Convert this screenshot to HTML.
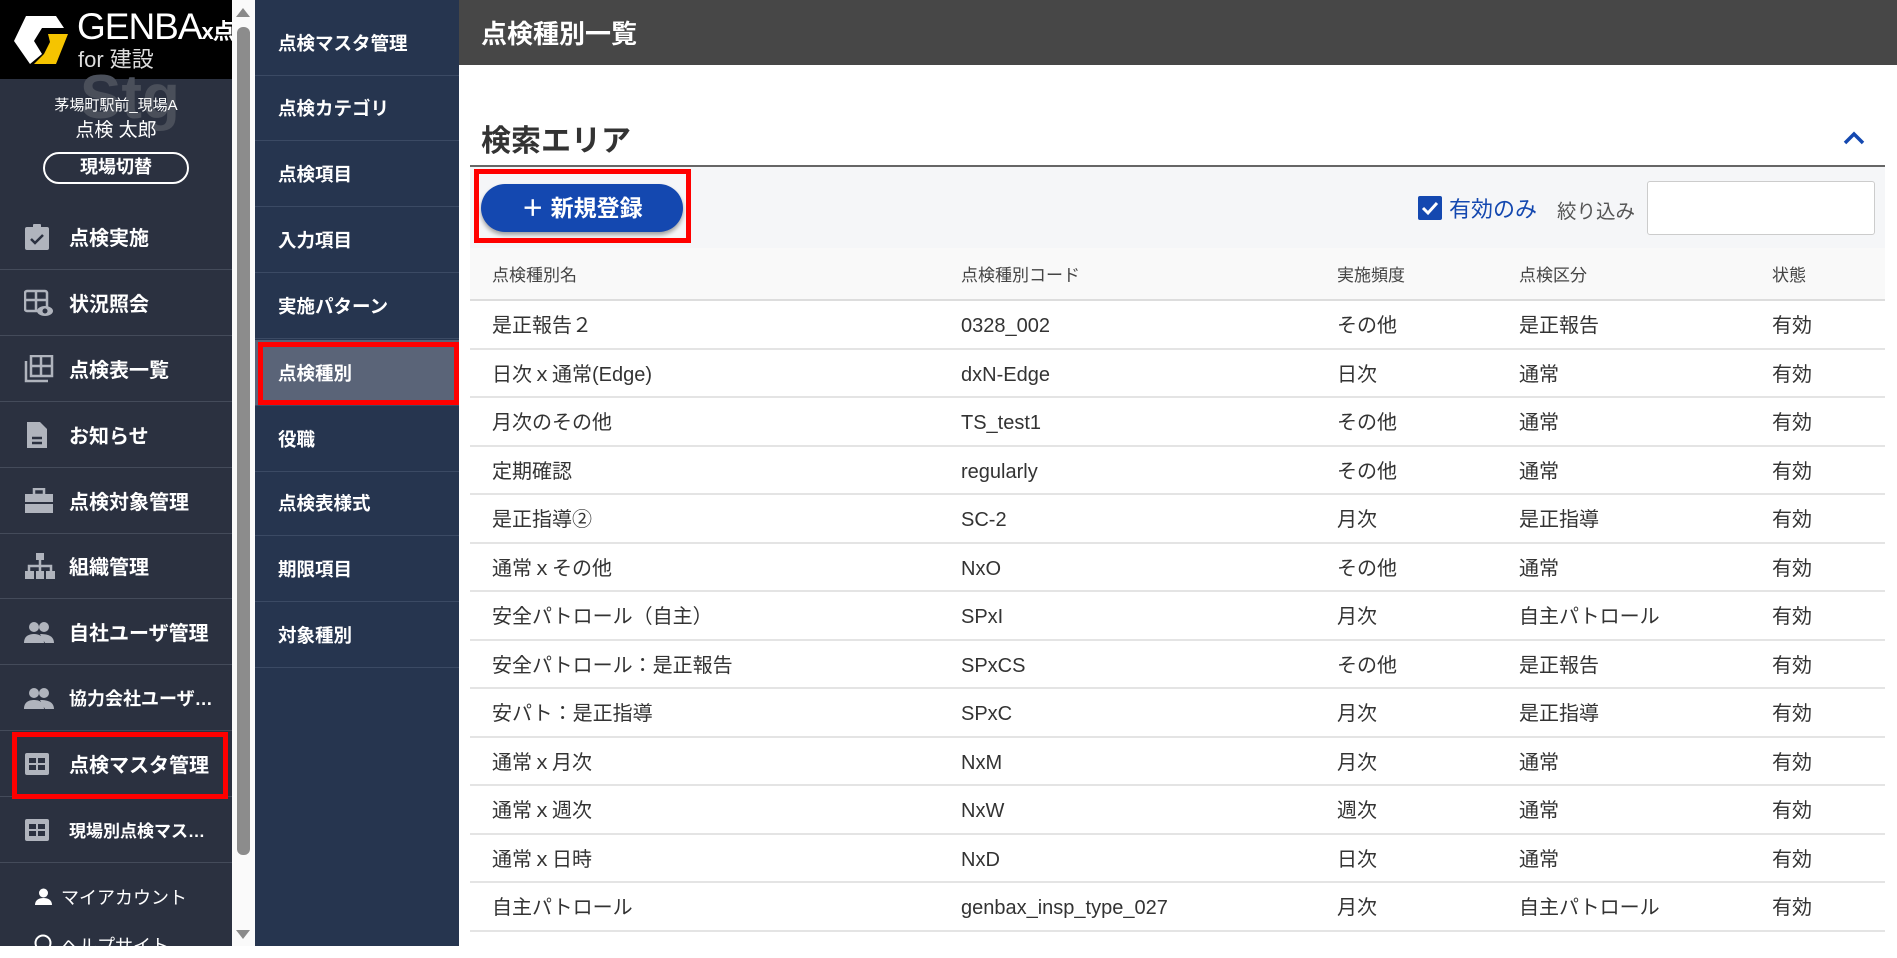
<!DOCTYPE html>
<html><head><meta charset="utf-8"><style>
*{margin:0;padding:0;box-sizing:border-box}
body{width:1897px;height:946px;overflow:hidden;position:relative;background:#fff;font-family:"Liberation Sans","Noto Sans CJK JP",sans-serif;color:#333}
.abs{position:absolute}
#side{left:0;top:0;width:232px;height:946px;background:#2b3140}
#logo{left:0;top:0;width:232px;height:79px;background:#000}
.si{position:absolute;left:0;width:232px;height:66px;border-bottom:1px solid #444b5a;color:#fff;font-weight:bold;font-size:20px;display:flex;align-items:center}
.si svg{position:absolute;left:24px}
.si span{position:absolute;left:69px;white-space:nowrap}
#sb{left:232px;top:0;width:23px;height:946px;background:#fafafa}
#nav2{left:255px;top:0;width:204px;height:946px;background:#26354f}
.ni{position:absolute;left:0;width:204px;height:66px;border-bottom:1px solid #3b4a64;color:#fff;font-weight:bold;font-size:18.5px;padding-left:23px;display:flex;align-items:center}
#hdr{left:459px;top:0;width:1438px;height:65px;background:#474747;color:#fff;font-weight:bold;font-size:26px;padding:14px 0 0 22px}
.row{position:absolute;left:470px;width:1415px;height:48.5px;border-bottom:2px solid #e4e4e4;font-size:20px;color:#333}
.row div,.hr div{position:absolute;top:0;line-height:51px;white-space:nowrap}
.hr div{line-height:55px}
.c1{left:22px}.c2{left:491px}.c3{left:867px}.c4{left:1049px}.c5{left:1302px}
</style></head><body>
<div id="side" class="abs">
<div id="logo" class="abs">
<svg class="abs" style="left:12px;top:14px" width="58" height="52" viewBox="0 0 58 52"><polygon points="14,2 44,2 52,14 30,14 22,27 30,40 18,50 2,27" fill="#fff"/><polygon points="36,20 56,20 44,50 22,50 32,40 38,28" fill="#f5c400"/></svg>
<div class="abs" style="left:77px;top:6px;color:#fff;font-size:37px;letter-spacing:-1px;white-space:nowrap">GENBA<span style="font-size:22px;font-weight:bold">x点検</span></div>
<div class="abs" style="left:78px;top:42px;color:#ddd;font-size:22px">for 建設</div>
</div>
<div class="abs" style="left:80px;top:62px;font-size:62px;font-weight:bold;color:#4a4f5a">Stg</div>
<div class="abs" style="left:0;width:232px;top:94px;text-align:center;color:#fff;font-size:15px">茅場町駅前_現場A</div>
<div class="abs" style="left:0;width:232px;top:115px;text-align:center;color:#fff;font-size:19px">点検 太郎</div>
<div class="abs" style="left:43px;top:152px;width:146px;height:32px;border:2px solid #fff;border-radius:16px;color:#fff;font-weight:bold;font-size:18px;text-align:center;line-height:27px">現場切替</div>
<div class="si" style="top:204px"><svg width="26" height="28" viewBox="0 0 26 28"><rect x="1" y="4" width="24" height="23" rx="2" fill="#b0b4bd"/><rect x="9" y="1" width="8" height="5" rx="1" fill="#b0b4bd"/><path d="M7 16l4 4 8-8" stroke="#2b3140" stroke-width="2.5" fill="none"/></svg><span>点検実施</span></div>
<div class="si" style="top:270px"><svg width="30" height="28" viewBox="0 0 30 28"><rect x="1" y="2" width="22" height="20" rx="2" fill="none" stroke="#b0b4bd" stroke-width="2.5"/><path d="M1 11h22M12 2v20" stroke="#b0b4bd" stroke-width="2.5"/><ellipse cx="21" cy="22" rx="8" ry="5" fill="#b0b4bd"/><circle cx="21" cy="22" r="2.5" fill="#2b3140"/></svg><span>状況照会</span></div>
<div class="si" style="top:336px"><svg width="30" height="28" viewBox="0 0 30 28"><path d="M2 6v20h22" stroke="#b0b4bd" stroke-width="2.5" fill="none"/><rect x="7" y="1" width="21" height="20" fill="none" stroke="#b0b4bd" stroke-width="2.5"/><path d="M7 11h21M17 1v20" stroke="#b0b4bd" stroke-width="2.5"/></svg><span>点検表一覧</span></div>
<div class="si" style="top:402px"><svg width="26" height="28" viewBox="0 0 26 28"><path d="M3 1h13l7 7v19H3z" fill="#b0b4bd"/><path d="M8 17h10M8 22h10" stroke="#2b3140" stroke-width="2.5"/></svg><span>お知らせ</span></div>
<div class="si" style="top:468px"><svg width="30" height="26" viewBox="0 0 30 26"><rect x="10" y="1" width="10" height="6" fill="none" stroke="#b0b4bd" stroke-width="2.5"/><rect x="1" y="6" width="28" height="19" fill="#b0b4bd"/><path d="M1 15h28" stroke="#2b3140" stroke-width="2"/></svg><span>点検対象管理</span></div>
<div class="si" style="top:533px"><svg width="32" height="28" viewBox="0 0 32 28"><rect x="12" y="1" width="8" height="7" fill="#b0b4bd"/><path d="M16 8v6M5 20v-6h22v6M16 14v6" stroke="#b0b4bd" stroke-width="2.5" fill="none"/><rect x="1" y="19" width="9" height="8" fill="#b0b4bd"/><rect x="12" y="19" width="8" height="8" fill="#b0b4bd"/><rect x="22" y="19" width="9" height="8" fill="#b0b4bd"/></svg><span>組織管理</span></div>
<div class="si" style="top:599px"><svg width="30" height="22" viewBox="0 0 30 22"><circle cx="10" cy="6" r="5" fill="#b0b4bd"/><circle cx="20" cy="6" r="5" fill="#b0b4bd"/><path d="M0 22c0-7 5-9 10-9s10 2 10 9zM16 13c6 0 14 1 14 9h-9" fill="#b0b4bd"/></svg><span>自社ユーザ管理</span></div>
<div class="si" style="top:665px"><svg width="30" height="22" viewBox="0 0 30 22"><circle cx="10" cy="6" r="5" fill="#b0b4bd"/><circle cx="20" cy="6" r="5" fill="#b0b4bd"/><path d="M0 22c0-7 5-9 10-9s10 2 10 9zM16 13c6 0 14 1 14 9h-9" fill="#b0b4bd"/></svg><span style="font-size:18px">協力会社ユーザ…</span></div>
<div class="si" style="top:731px"><svg width="26" height="24" viewBox="0 0 26 24"><rect x="1" y="1" width="24" height="22" rx="2" fill="#b0b4bd"/><path d="M5 6h7v5H5zM14 6h7v5h-7zM5 13h7v5H5zM14 13h7v5h-7z" fill="#2b3140"/></svg><span>点検マスタ管理</span></div>
<div class="si" style="top:797px"><svg width="26" height="24" viewBox="0 0 26 24"><rect x="1" y="1" width="24" height="22" rx="2" fill="#b0b4bd"/><path d="M5 6h7v5H5zM14 6h7v5h-7zM5 13h7v5H5zM14 13h7v5h-7z" fill="#2b3140"/></svg><span style="font-size:17px">現場別点検マス…</span></div>
<div class="abs" style="left:12px;top:732px;width:216px;height:67px;border:5px solid #f00"></div>
<svg class="abs" style="left:35px;top:888px" width="17" height="17" viewBox="0 0 17 17"><circle cx="8.5" cy="5" r="4.5" fill="#fff"/><path d="M0 17c0-5 4-7 8.5-7s8.5 2 8.5 7z" fill="#fff"/></svg>
<div class="abs" style="left:61px;top:884px;color:#fff;font-size:18px">マイアカウント</div>
<svg class="abs" style="left:34px;top:934px" width="18" height="18" viewBox="0 0 18 18"><circle cx="9" cy="9" r="7.5" fill="none" stroke="#fff" stroke-width="2"/></svg>
<div class="abs" style="left:61px;top:932px;color:#fff;font-size:18px">ヘルプサイト</div>
</div>
<div id="sb" class="abs"><svg class="abs" style="left:4px;top:8px" width="14" height="9"><polygon points="7,0 14,9 0,9" fill="#8a8a8a"/></svg><div class="abs" style="left:5px;top:27px;width:13px;height:828px;background:#8c8c8c;border-radius:6px"></div><svg class="abs" style="left:4px;top:930px" width="14" height="9"><polygon points="0,0 14,0 7,9" fill="#8a8a8a"/></svg></div>
<div id="nav2" class="abs">
<div class="ni" style="top:10px;height:66px">点検マスタ管理</div>
<div class="ni" style="top:76px;height:65px">点検カテゴリ</div>
<div class="ni" style="top:141px">点検項目</div>
<div class="ni" style="top:207px">入力項目</div>
<div class="ni" style="top:273px">実施パターン</div>
<div class="ni" style="top:340px;background:#5a6478">点検種別</div>
<div class="ni" style="top:406px">役職</div>
<div class="ni" style="top:470px">点検表様式</div>
<div class="ni" style="top:536px">期限項目</div>
<div class="ni" style="top:602px">対象種別</div>
<div class="abs" style="left:3px;top:342px;width:201px;height:63px;border:5px solid #f00"></div>
</div>
<div id="hdr" class="abs">点検種別一覧</div>
<div class="abs" style="left:481px;top:116px;font-size:30px;font-weight:bold;color:#333">検索エリア</div>
<svg class="abs" style="left:1843px;top:131px" width="22" height="14" viewBox="0 0 22 14"><path d="M2 12L11 3l9 9" stroke="#1448b0" stroke-width="3.5" fill="none"/></svg>
<div class="abs" style="left:470px;top:165px;width:1415px;height:2px;background:#666"></div>
<div class="abs" style="left:470px;top:167px;width:1415px;height:81px;background:#f5f6f8"></div>
<div class="abs" style="left:481px;top:184px;width:202px;height:48px;border-radius:24px;background:#1448b0;box-shadow:0 3px 4px rgba(0,0,0,.35);color:#fff;font-weight:bold;font-size:23px;text-align:center;line-height:48px">＋ 新規登録</div>
<div class="abs" style="left:474px;top:169px;width:217px;height:74px;border:5px solid #f00"></div>
<svg class="abs" style="left:1418px;top:196px" width="24" height="24" viewBox="0 0 24 24"><rect width="24" height="24" rx="2" fill="#1448b0"/><path d="M5 12l5 5 9-10" stroke="#fff" stroke-width="3" fill="none"/></svg>
<div class="abs" style="left:1449px;top:192px;font-size:22px;color:#1448b0">有効のみ</div>
<div class="abs" style="left:1557px;top:195px;font-size:19.5px;color:#555">絞り込み</div>
<div class="abs" style="left:1647px;top:181px;width:228px;height:54px;background:#fff;border:1px solid #ccc;border-radius:3px"></div>
<div class="hr abs" style="left:470px;top:248px;width:1415px;height:53px;background:#f9f9f9;border-bottom:2px solid #ddd;font-size:17px;color:#444"><div class="c1">点検種別名</div><div class="c2">点検種別コード</div><div class="c3">実施頻度</div><div class="c4">点検区分</div><div class="c5">状態</div></div>
<div class="row" style="top:301px"><div class="c1">是正報告２</div><div class="c2">0328_002</div><div class="c3">その他</div><div class="c4">是正報告</div><div class="c5">有効</div></div>
<div class="row" style="top:349.5px"><div class="c1">日次ｘ通常(Edge)</div><div class="c2">dxN-Edge</div><div class="c3">日次</div><div class="c4">通常</div><div class="c5">有効</div></div>
<div class="row" style="top:398px"><div class="c1">月次のその他</div><div class="c2">TS_test1</div><div class="c3">その他</div><div class="c4">通常</div><div class="c5">有効</div></div>
<div class="row" style="top:446.5px"><div class="c1">定期確認</div><div class="c2">regularly</div><div class="c3">その他</div><div class="c4">通常</div><div class="c5">有効</div></div>
<div class="row" style="top:495px"><div class="c1">是正指導②</div><div class="c2">SC-2</div><div class="c3">月次</div><div class="c4">是正指導</div><div class="c5">有効</div></div>
<div class="row" style="top:543.5px"><div class="c1">通常ｘその他</div><div class="c2">NxO</div><div class="c3">その他</div><div class="c4">通常</div><div class="c5">有効</div></div>
<div class="row" style="top:592px"><div class="c1">安全パトロール（自主）</div><div class="c2">SPxI</div><div class="c3">月次</div><div class="c4">自主パトロール</div><div class="c5">有効</div></div>
<div class="row" style="top:640.5px"><div class="c1">安全パトロール：是正報告</div><div class="c2">SPxCS</div><div class="c3">その他</div><div class="c4">是正報告</div><div class="c5">有効</div></div>
<div class="row" style="top:689px"><div class="c1">安パト：是正指導</div><div class="c2">SPxC</div><div class="c3">月次</div><div class="c4">是正指導</div><div class="c5">有効</div></div>
<div class="row" style="top:737.5px"><div class="c1">通常ｘ月次</div><div class="c2">NxM</div><div class="c3">月次</div><div class="c4">通常</div><div class="c5">有効</div></div>
<div class="row" style="top:786px"><div class="c1">通常ｘ週次</div><div class="c2">NxW</div><div class="c3">週次</div><div class="c4">通常</div><div class="c5">有効</div></div>
<div class="row" style="top:834.5px"><div class="c1">通常ｘ日時</div><div class="c2">NxD</div><div class="c3">日次</div><div class="c4">通常</div><div class="c5">有効</div></div>
<div class="row" style="top:883px"><div class="c1">自主パトロール</div><div class="c2">genbax_insp_type_027</div><div class="c3">月次</div><div class="c4">自主パトロール</div><div class="c5">有効</div></div>
</body></html>
